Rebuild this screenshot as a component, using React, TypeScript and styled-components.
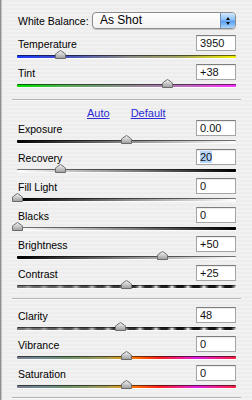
import React, { useId } from "react";
import styled, { createGlobalStyle } from "styled-components";

const Global = createGlobalStyle`
  html, body { margin: 0; padding: 0; background: #ececec; }
  * { box-sizing: border-box; }
`;

const Panel = styled.div`
  width: 252px;
  height: 400px;
  overflow: hidden;
  padding-top: 12px;
  font-family: "Liberation Sans", Arial, sans-serif;
  color: #000;
  background: repeating-linear-gradient(
    to bottom,
    #ededed 0px,
    #ededed 2px,
    #f1f1f1 2px,
    #f1f1f1 4px
  );
  box-shadow: inset 1px 0 0 #8e8e8e, inset 2px 0 0 #c4c4c4;
`;

const Content = styled.div<{ $mt?: number }>`
  padding: 0 16px 0 17px;
  margin-top: ${(p) => p.$mt ?? 0}px;
`;

const WBRow = styled.div`
  display: flex;
  align-items: center;
  height: 17px;
  padding-left: 1px;
`;

const WBLabel = styled.span`
  font-size: 10.5px;
`;

const Select = styled.div`
  margin-left: auto;
  width: 144px;
  height: 17px;
  display: flex;
  align-items: center;
  border: 1px solid #8c8c8c;
  border-radius: 4px;
  background: linear-gradient(#ffffff, #f2f2f2);
  box-shadow: 0 1px 1px rgba(0, 0, 0, 0.18);
  overflow: hidden;
`;

const SelectText = styled.span`
  flex: 1;
  padding-left: 7px;
  font-size: 12px;
  line-height: 15px;
`;

const Stepper = styled.div`
  width: 15px;
  height: 100%;
  display: flex;
  flex-direction: column;
  align-items: center;
  justify-content: center;
  gap: 2px;
  border-left: 1px solid #6d8fb8;
  background: linear-gradient(#d3e8fd 0%, #8cc0f6 45%, #5b9ef0 55%, #a9d6ff 100%);
`;

const ArrowUp = styled.span`
  width: 0;
  height: 0;
  border-left: 2.5px solid transparent;
  border-right: 2.5px solid transparent;
  border-bottom: 3px solid #111;
`;

const ArrowDown = styled.span`
  width: 0;
  height: 0;
  border-left: 2.5px solid transparent;
  border-right: 2.5px solid transparent;
  border-top: 3px solid #111;
`;

const Row = styled.div`
  height: 29px;
  display: grid;
  grid-template-columns: 1fr 40px;
  grid-template-rows: 16px 13px;
`;

const Label = styled.div`
  font-size: 10.5px;
  line-height: 14px;
  padding-top: 2px;
  padding-left: 1px;
`;

const Input = styled.div`
  height: 16px;
  border: 1px solid #a4a4a4;
  border-top-color: #7e7e7e;
  background: #fff;
  font-size: 11px;
  line-height: 14px;
  padding-left: 3px;
  color: #111;
  box-shadow: inset 0 1px 0 rgba(0, 0, 0, 0.08);
`;

const Selected = styled.span`
  background: #b5d5fe;
`;

const TrackWrap = styled.div`
  grid-column: 1 / span 2;
  position: relative;
  height: 3px;
  margin-top: 4px;
`;

const Track = styled.div<{ $bg: string }>`
  height: 3px;
  border-radius: 1px;
  background: ${(p) => p.$bg};
  box-shadow: inset 0 1px 0 rgba(0, 0, 0, 0.55), 0 1px 0 rgba(255, 255, 255, 0.7);
`;

const ThumbBox = styled.div`
  position: absolute;
  top: -5px;
  width: 11px;
  height: 9px;
  display: block;
  line-height: 0;
`;

const Separator = styled.div<{ $mt: number }>`
  margin: ${(p) => p.$mt}px 11px 0 12px;
  height: 2px;
  border-top: 1px solid #b4b4b4;
  border-bottom: 1px solid #fbfbfb;
`;

const LinkRow = styled.div`
  height: 15px;
  margin-top: 4px;
  display: flex;
  align-items: center;
  padding-left: 87px;
  gap: 21px;
`;

const Link = styled.span`
  font-size: 11px;
  color: #2b2bd4;
  text-decoration: underline;
`;

const Thumb: React.FC<{ x: number }> = ({ x }) => {
  const id = useId().replace(/:/g, "");
  return (
    <ThumbBox style={{ left: `${x - 17 - 5.5}px` }}>
      <svg width="11" height="9" viewBox="0 0 11 9">
        <defs>
          <linearGradient id={id} x1="0" y1="0" x2="0" y2="1">
            <stop offset="0" stopColor="#f6f6f6" />
            <stop offset="1" stopColor="#9c9c9c" />
          </linearGradient>
        </defs>
        <path
          d="M0.5 8.5 V5 Q0.5 3.8 1.8 2.9 L5.5 0.5 L9.2 2.9 Q10.5 3.8 10.5 5 V8.5 Z"
          fill={`url(#${id})`}
          stroke="#6b6b6b"
          strokeWidth="1"
        />
      </svg>
    </ThumbBox>
  );
};

const stripes =
  "repeating-linear-gradient(to right, #151515 0px, #151515 6px, #8a8a8a 9px, #f4f4f4 11px, #8a8a8a 13px, #151515 16px)";
const rainbow =
  "linear-gradient(to right, #2040ff, #00d0ff 10%, #20d020 22%, #e8e000 38%, #ff8000 52%, #ff2020 65%, #e020e0 82%, #ff2040 100%)";

const G = {
  temp: "linear-gradient(to right, #1838ff 0%, #4b55b8 25%, #8a8a8a 50%, #a5a560 75%, #f4f000 100%)",
  tint: "linear-gradient(to right, #00e000 0%, #5fa85f 25%, #8c8c8c 50%, #b870b8 75%, #ff30ff 100%)",
  up: "linear-gradient(to right, #000 0%, #888 50%, #fff 100%)",
  down: "linear-gradient(to right, #fff 0%, #888 50%, #000 100%)",
  stripe: `linear-gradient(to right, rgba(135,135,135,0.85) 0%, rgba(135,135,135,0.4) 40%, rgba(135,135,135,0) 75%), ${stripes}`,
  color: `linear-gradient(to right, rgba(130,130,130,0.92) 0%, rgba(130,130,130,0.7) 40%, rgba(130,130,130,0) 52%), ${rainbow}`,
};

type RowData = { label: string; value: React.ReactNode; x: number; bg: string };

const section1: RowData[] = [
  { label: "Temperature", value: "3950", x: 60, bg: G.temp },
  { label: "Tint", value: "+38", x: 167, bg: G.tint },
];

const section2: RowData[] = [
  { label: "Exposure", value: "0.00", x: 126, bg: G.up },
  { label: "Recovery", value: <Selected>20</Selected>, x: 60, bg: G.down },
  { label: "Fill Light", value: "0", x: 17, bg: G.up },
  { label: "Blacks", value: "0", x: 17, bg: G.down },
  { label: "Brightness", value: "+50", x: 162, bg: G.up },
  { label: "Contrast", value: "+25", x: 126, bg: G.stripe },
];

const section3: RowData[] = [
  { label: "Clarity", value: "48", x: 120, bg: G.stripe },
  { label: "Vibrance", value: "0", x: 126, bg: G.color },
  { label: "Saturation", value: "0", x: 126, bg: G.color },
];

const SliderRow: React.FC<{ d: RowData }> = ({ d }) => (
  <Row>
    <Label>{d.label}</Label>
    <Input>{d.value}</Input>
    <TrackWrap>
      <Track $bg={d.bg} />
      <Thumb x={d.x} />
    </TrackWrap>
  </Row>
);

export default function App() {
  return (
    <>
      <Global />
      <Panel>
        <Content>
          <WBRow>
            <WBLabel>White Balance:</WBLabel>
            <Select>
              <SelectText>As Shot</SelectText>
              <Stepper>
                <ArrowUp />
                <ArrowDown />
              </Stepper>
            </Select>
          </WBRow>
        </Content>
        <Content $mt={6}>
          {section1.map((d) => (
            <SliderRow key={d.label} d={d} />
          ))}
        </Content>
        <Separator $mt={6} />
        <LinkRow>
          <Link>Auto</Link>
          <Link>Default</Link>
        </LinkRow>
        <Content>
          {section2.map((d) => (
            <SliderRow key={d.label} d={d} />
          ))}
        </Content>
        <Separator $mt={4} />
        <Content $mt={7}>
          {section3.map((d) => (
            <SliderRow key={d.label} d={d} />
          ))}
        </Content>
        <Separator $mt={3} />
      </Panel>
    </>
  );
}
